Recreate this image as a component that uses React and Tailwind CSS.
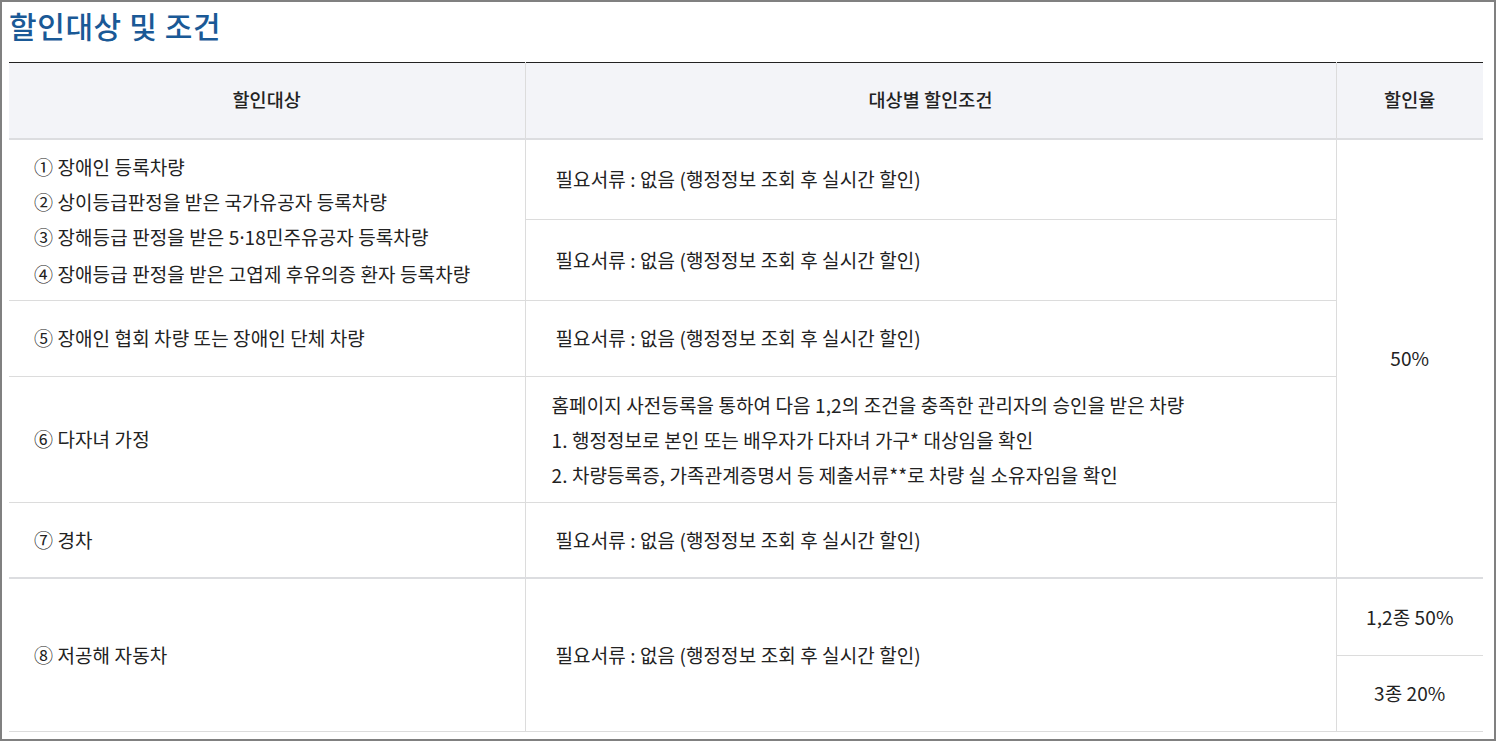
import React from 'react';

const NO_DOCS = '필요서류 : 없음 (행정정보 조회 후 실시간 할인)';

const App = () => {
  const td = 'border border-[#dcdcdc] align-middle';
  return (
    <div
      className="w-[1496px] h-[741px] border-2 border-[#808080] bg-white overflow-hidden text-[#222]"
      style={{ fontFamily: '"Noto Sans CJK KR", "Noto Sans", sans-serif' }}
    >
      <div className="pl-[7px] pr-[9px]">
        {/* Title */}
        <h2 className="pt-[3px] h-[60px] text-[30px] leading-[40px] font-medium text-[#1a5996] tracking-[0.6px]">
          할인대상 및 조건
        </h2>

        {/* Table */}
        <table className="w-[1474px] border-collapse table-fixed text-[19px] tracking-[0.1px]">
          <colgroup>
            <col className="w-[516px]" />
            <col className="w-[811px]" />
            <col className="w-[147px]" />
          </colgroup>
          <thead>
            <tr className="bg-[#f3f4f8] border-t border-t-[#222] border-b-2 border-b-[#dcdde0] text-[18.5px]">
              <th className="h-[76px] font-medium border-r border-[#dcdcdc]">할인대상</th>
              <th className="font-medium border-r border-[#dcdcdc]">대상별 할인조건</th>
              <th className="font-medium">할인율</th>
            </tr>
          </thead>
          <tbody>
            <tr>
              <td rowSpan={2} className={`${td} border-l-0 pl-[25px] leading-[35px]`}>
                <p>① 장애인 등록차량</p>
                <p>② 상이등급판정을 받은 국가유공자 등록차량</p>
                <p>
                  ③ 장해등급 판정을 받은 5<span className="font-['Noto_Sans']">·</span>18민주유공자 등록차량
                </p>
                <p>④ 장애등급 판정을 받은 고엽제 후유의증 환자 등록차량</p>
              </td>
              <td className={`${td} h-[81px] pl-[30px]`}>{NO_DOCS}</td>
              <td rowSpan={5} className={`${td} border-r-0 text-center`}>50%</td>
            </tr>
            <tr>
              <td className={`${td} h-[81px] pl-[30px]`}>{NO_DOCS}</td>
            </tr>
            <tr>
              <td className={`${td} border-l-0 h-[76px] pl-[25px]`}>⑤ 장애인 협회 차량 또는 장애인 단체 차량</td>
              <td className={`${td} pl-[30px]`}>{NO_DOCS}</td>
            </tr>
            <tr>
              <td className={`${td} border-l-0 h-[126px] pl-[25px]`}>⑥ 다자녀 가정</td>
              <td className={`${td} pl-[26px] leading-[35px]`}>
                <p>홈페이지 사전등록을 통하여 다음 1,2의 조건을 충족한 관리자의 승인을 받은 차량</p>
                <p>1. 행정정보로 본인 또는 배우자가 다자녀 가구* 대상임을 확인</p>
                <p>2. 차량등록증, 가족관계증명서 등 제출서류**로 차량 실 소유자임을 확인</p>
              </td>
            </tr>
            <tr className="border-b-2 border-b-[#dcdde0]">
              <td className={`${td} border-l-0 h-[75px] pl-[25px]`}>⑦ 경차</td>
              <td className={`${td} pl-[30px]`}>{NO_DOCS}</td>
            </tr>
            <tr>
              <td rowSpan={2} className={`${td} border-l-0 pl-[25px]`}>⑧ 저공해 자동차</td>
              <td rowSpan={2} className={`${td} pl-[30px]`}>{NO_DOCS}</td>
              <td className={`${td} border-r-0 h-[78px] text-center`}>1,2종 50%</td>
            </tr>
            <tr>
              <td className={`${td} border-r-0 h-[76px] text-center`}>3종 20%</td>
            </tr>
          </tbody>
        </table>
      </div>
    </div>
  );
};

export default App;
